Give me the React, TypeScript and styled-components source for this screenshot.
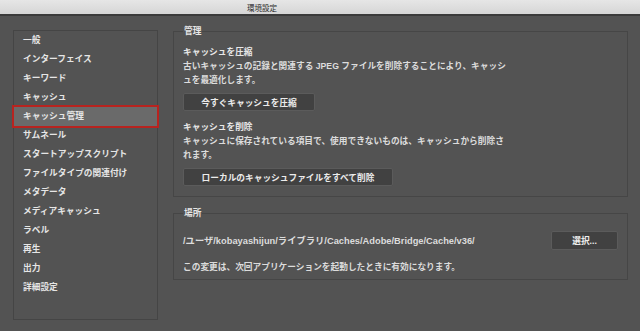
import styled, { createGlobalStyle } from 'styled-components';

const GlobalStyle = createGlobalStyle`
  html, body {
    margin: 0;
    padding: 0;
    background: #535353;
  }
  body {
    font-family: "Liberation Sans", "Noto Sans CJK JP", sans-serif;
    -webkit-font-smoothing: antialiased;
  }
`;

const Window = styled.div`
  width: 640px;
  height: 331px;
  background: #535353;
  overflow: hidden;
`;

const TitleBar = styled.div`
  height: 14px;
  display: flex;
  align-items: center;
  justify-content: center;
  padding-right: 116px;
  background: linear-gradient(#e6e6e6, #d6d6d6);
  border-bottom: 2px solid #3b3b3b;
  font-size: 7.5px;
  color: #2b2b2b;
`;

const Main = styled.div`
  display: flex;
  align-items: flex-start;
  gap: 15px;
  padding: 14px 12px 0 13px;
`;

const Sidebar = styled.ul`
  list-style: none;
  margin: 0;
  padding: 0;
  width: 143px;
  height: 288px;
  border: 1px solid #454545;
`;

const NavItem = styled.li<{ $active?: boolean }>`
  height: 19px;
  line-height: 19px;
  padding-left: 9px;
  font-size: 8.7px;
  font-weight: 600;
  color: #e6e6e6;
  background: ${({ $active }) => ($active ? '#6a6a6a' : 'transparent')};
  outline: ${({ $active }) => ($active ? '2px solid #b8231f' : 'none')};
`;

const Panel = styled.div`
  width: 455px;
  margin-top: -4px;
  display: flex;
  flex-direction: column;
  gap: 11px;
`;

const Group = styled.fieldset<{ $bottom: number }>`
  margin: 0;
  padding: 0 9px ${({ $bottom }) => $bottom}px 9px;
  border: 1px solid #464646;
  min-width: 0;
`;

const Legend = styled.legend`
  padding: 0 1px;
  font-size: 8.7px;
  line-height: 10px;
  font-weight: 600;
  color: #e6e6e6;
`;

const Heading = styled.div<{ $top: number }>`
  margin-top: ${({ $top }) => $top}px;
  font-size: 8.7px;
  line-height: 14px;
  font-weight: 600;
  color: #e8e8e8;
`;

const Text = styled.div<{ $top?: number }>`
  margin-top: ${({ $top }) => $top ?? 0}px;
  font-size: 8.7px;
  line-height: 14px;
  font-weight: 600;
  color: #dcdcdc;
`;

const PathText = styled(Text)`
  font-size: 9.3px;
`;

const Button = styled.button<{ $w: number; $h?: number; $top?: number }>`
  display: block;
  width: ${({ $w }) => $w}px;
  height: ${({ $h }) => $h ?? 18}px;
  margin-top: ${({ $top }) => $top ?? 6}px;
  padding: 0;
  background: #414141;
  border: 1px solid #5b5b5b;
  border-radius: 2px;
  font-family: inherit;
  font-size: 8.7px;
  font-weight: 600;
  color: #ececec;
`;

const PathRow = styled.div`
  margin-top: 13px;
  display: flex;
  align-items: center;
  justify-content: space-between;
`;

const items = [
  '一般',
  'インターフェイス',
  'キーワード',
  'キャッシュ',
  'キャッシュ管理',
  'サムネール',
  'スタートアップスクリプト',
  'ファイルタイプの関連付け',
  'メタデータ',
  'メディアキャッシュ',
  'ラベル',
  '再生',
  '出力',
  '詳細設定',
];

export default function App() {
  return (
    <Window>
      <GlobalStyle />
      <TitleBar>環境設定</TitleBar>
      <Main>
        <Sidebar>
          {items.map((name) => (
            <NavItem key={name} $active={name === 'キャッシュ管理'}>
              {name}
            </NavItem>
          ))}
        </Sidebar>
        <Panel>
          <Group $bottom={10}>
            <Legend>管理</Legend>
            <Heading $top={9}>キャッシュを圧縮</Heading>
            <Text>
              古いキャッシュの記録と関連する JPEG ファイルを削除することにより、キャッシ
              <br />
              ュを最適化します。
            </Text>
            <Button $w={132}>今すぐキャッシュを圧縮</Button>
            <Heading $top={9}>キャッシュを削除</Heading>
            <Text>
              キャッシュに保存されている項目で、使用できないものは、キャッシュから削除さ
              <br />
              れます。
            </Text>
            <Button $w={210}>ローカルのキャッシュファイルをすべて削除</Button>
          </Group>
          <Group $bottom={5}>
            <Legend>場所</Legend>
            <PathRow>
              <PathText>/ユーザ/kobayashijun/ライブラリ/Caches/Adobe/Bridge/Cache/v36/</PathText>
              <Button $w={67} $h={19} $top={0}>
                選択...
              </Button>
            </PathRow>
            <Text $top={10}>この変更は、次回アプリケーションを起動したときに有効になります。</Text>
          </Group>
        </Panel>
      </Main>
    </Window>
  );
}
